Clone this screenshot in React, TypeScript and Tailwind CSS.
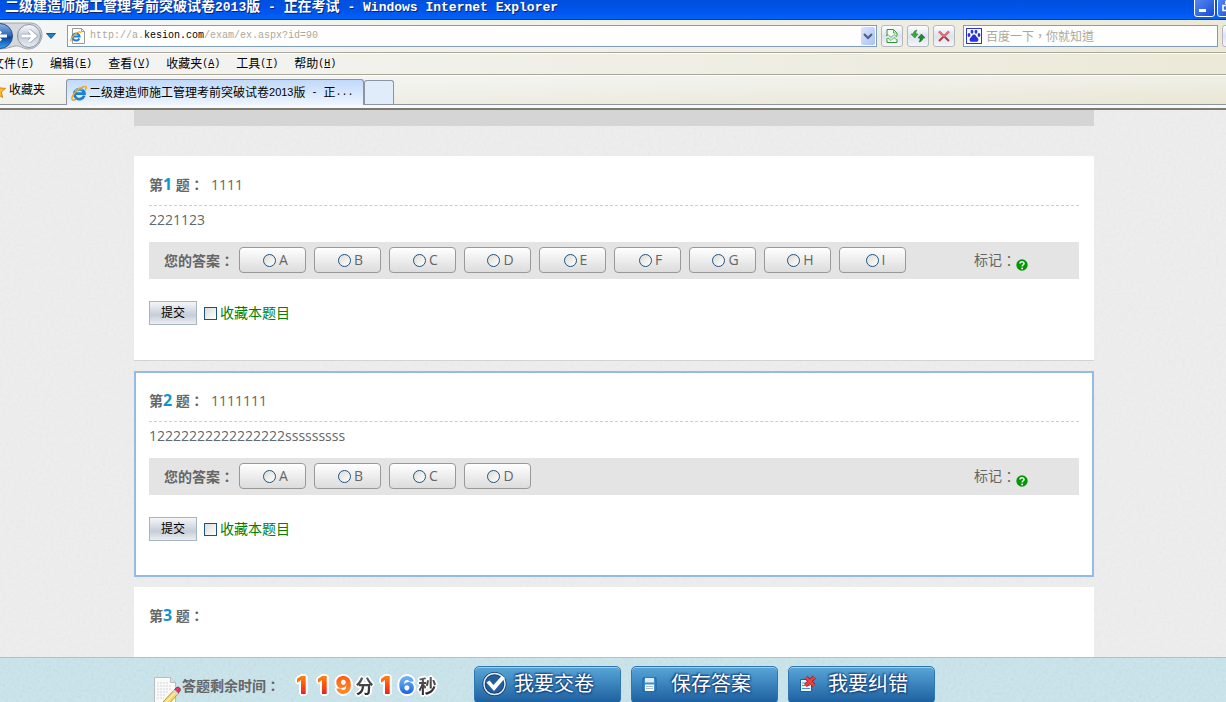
import { useState } from "react"
import type { ReactNode } from "react"
import { clsx } from "clsx"

type Question = {
  id: number
  title: string
  body: string
  options: string[]
}

const menuItems = [
  { label: "文件", hotkey: "F" },
  { label: "编辑", hotkey: "E" },
  { label: "查看", hotkey: "V" },
  { label: "收藏夹", hotkey: "A" },
  { label: "工具", hotkey: "T" },
  { label: "帮助", hotkey: "H" },
]

const questions: Question[] = [
  { id: 1, title: "1111", body: "2221123", options: ["A", "B", "C", "D", "E", "F", "G", "H", "I"] },
  { id: 2, title: "1111111", body: "12222222222222222sssssssss", options: ["A", "B", "C", "D"] },
  { id: 3, title: "", body: "", options: [] },
]

const RED = "from-[#ff8a10] via-[#fb4a12] to-[#d80022]"
const ORANGE = "from-[#ff5a10] to-[#ff9430]"
const BLUE = "from-[#7cc0fa] to-[#0a50d8]"
const GRAY = "from-[#666666] to-[#222222]"

const clockCells = [
  { text: "1", color: RED },
  { text: "1", color: RED },
  { text: "9", color: ORANGE },
  { text: "分", color: GRAY, unit: true },
  { text: "1", color: RED },
  { text: "6", color: BLUE },
  { text: "秒", color: GRAY, unit: true },
]

// Full-width colon centred in its cell
function Colon() {
  return <span className="font-['Noto_Sans_CJK_TC',sans-serif]">：</span>
}

function Texture({ id, className }: { id: string; className: string }) {
  return (
    <svg aria-hidden="true" className={clsx("pointer-events-none absolute inset-0 h-full w-full", className)}>
      <filter id={id}>
        <feTurbulence type="fractalNoise" baseFrequency="0.35" numOctaves="2" stitchTiles="stitch" />
        <feColorMatrix type="saturate" values="0" />
      </filter>
      <rect width="100%" height="100%" filter={`url(#${id})`} />
    </svg>
  )
}

function IeLogo({ className }: { className: string }) {
  return (
    <svg viewBox="0 0 16 16" className={className} aria-hidden="true">
      <path d="M13.2 10.6A5 5 0 1 1 13.4 8.6H4.8" fill="none" stroke="#1b7fd6" strokeWidth="2.8" />
      <path d="M4 5.8A5 5 0 0 1 11.5 5" fill="none" stroke="#69c4f5" strokeWidth="1.2" />
      <path d="M1.6 15C-.6 13.4 2.6 7.6 7.6 4.2 11 1.8 14.6.6 15.2 2c.3.8-.2 2-.9 3" fill="none" stroke="#f2a915" strokeWidth="1.5" />
      <path d="M1.6 15c1 .5 2.6-.2 4-1.2" fill="none" stroke="#d98a08" strokeWidth="1.3" />
    </svg>
  )
}

function BackForward() {
  return (
    <svg viewBox="0 0 44 30" className="h-[30px] w-11 shrink-0" aria-hidden="true">
      <defs>
        <linearGradient id="back" x1="0" y1="0" x2="0" y2="1">
          <stop offset="0" stopColor="#8fb4e4" />
          <stop offset=".48" stopColor="#2a66b8" />
          <stop offset=".55" stopColor="#0c429a" />
          <stop offset="1" stopColor="#35a4f4" />
        </linearGradient>
        <linearGradient id="forward" x1="0" y1="0" x2="0" y2="1">
          <stop offset="0" stopColor="#fafcff" />
          <stop offset=".5" stopColor="#c4ccd8" />
          <stop offset="1" stopColor="#e8edf4" />
        </linearGradient>
      </defs>
      <path d="M0 2h30c9 0 12 7 12 12s-4 14-14 14c-5 0-8-4-13-3S6 28 0 28" fill="#d4d8dd" stroke="#a2a6ac" />
      <circle cx="0" cy="15" r="12.5" fill="url(#back)" stroke="#2b4f86" />
      <path d="M-2 15h9M1 10.5l-5 4.5 5 4.5" fill="none" stroke="#fff" strokeWidth="3" />
      <circle cx="29" cy="15" r="11.5" fill="url(#forward)" stroke="#8d949e" />
      <path d="M21.5 15h12M29 9.5l6 5.5-6 5.5" fill="none" stroke="#9aa2ae" strokeWidth="4.4" />
      <path d="M21.5 15h12M29 9.5l6 5.5-6 5.5" fill="none" stroke="#fff" strokeWidth="3" />
    </svg>
  )
}

function ToolButton({ label, children }: { label: string; children?: ReactNode }) {
  return (
    <button
      type="button"
      aria-label={label}
      className="flex h-[22px] w-[22px] shrink-0 items-center justify-center rounded-[3px] border border-[#b4b8bd] bg-gradient-to-b from-white via-[#dde2ee] to-[#f4f6fa]"
    >
      {children}
    </button>
  )
}

function BrowserChrome() {
  return (
    <header className="shrink-0 font-['Liberation_Sans','Noto_Sans_CJK_SC',sans-serif] text-xs text-black">
      {/* Title bar */}
      <div className="flex h-5 items-start justify-between overflow-hidden bg-gradient-to-b from-[#0050de] via-[#0055ee] via-60% to-[#0066ff] shadow-[inset_0_-1px_0_#0038c8]">
        <h1 className="whitespace-nowrap pl-[5px] font-['Liberation_Mono','Noto_Sans_CJK_SC',monospace] text-[13px] font-bold leading-[14px] text-white [text-shadow:1px_1px_0_#0a246a]">
          <span className="text-sm leading-[14px]">二级建造师施工管理考前突破试卷</span>2013
          <span className="text-sm leading-[14px]">版</span> - <span className="text-sm leading-[14px]">正在考试</span> - Windows Internet Explorer
        </h1>
        <div className="-mr-3 -mt-1 flex gap-0.5">
          <button type="button" aria-label="最小化" className="flex h-[21px] w-[21px] items-end rounded-[3px] border border-white bg-gradient-to-br from-[#5c8cf4] to-[#1448d8] pb-1 pl-1">
            <span className="h-[3px] w-[7px] bg-white" />
          </button>
          <button type="button" aria-label="还原" className="flex h-[21px] w-[21px] items-end rounded-[3px] border border-white bg-gradient-to-br from-[#5c8cf4] to-[#1448d8] pb-1 pl-1">
            <svg viewBox="0 0 12 12" className="h-3 w-3" aria-hidden="true">
              <path d="M1 5.5h6v5H1zM4 4V1.5h7v6H8" fill="none" stroke="#fff" strokeWidth="1.6" />
            </svg>
          </button>
        </div>
      </div>

      {/* Address and search */}
      <div className="h-8 overflow-hidden bg-gradient-to-r from-[#f4f6f7] via-[#f1f0e8] to-[#ece9d8]">
        <div className="-mr-[18px] flex h-8 items-center">
          <BackForward />
          <button type="button" aria-label="历史记录" className="flex w-[23px] justify-center pr-2.5">
            <svg viewBox="0 0 10 6" className="h-1.5 w-2.5" aria-hidden="true">
              <path d="M.5.5h9L5 5.5z" fill="#1c83c6" stroke="#123f72" strokeWidth=".8" />
            </svg>
          </button>
          <div className="flex h-[22px] flex-1 items-center border border-[#7f9db9] bg-white pl-0.5 pr-px">
            <svg viewBox="0 0 16 16" className="mr-1 h-4 w-4 shrink-0" aria-hidden="true">
              <path d="M2.5.5h9l3 3v12h-12z" fill="#fff" stroke="#9a9a9a" />
              <path d="M11.5.5v3h3" fill="none" stroke="#9a9a9a" />
              <path d="M9.3 10.5A3.6 3.6 0 1 1 9.6 8.6H3" fill="none" stroke="#1b7fd6" strokeWidth="2" />
              <path d="M1 13.5C0 11 4 6.5 7 4.8 9 3.6 11 3.4 10.8 5" fill="none" stroke="#f2a915" strokeWidth="1.2" />
            </svg>
            <label htmlFor="address" className="whitespace-nowrap font-['Liberation_Mono',monospace] text-[10px] text-[#aca899]">
              http://a.<span className="text-black">kesion.com</span>/exam/ex.aspx?id=90
            </label>
            <input id="address" type="text" className="h-full min-w-0 flex-1 bg-transparent outline-none" />
            <button type="button" aria-label="地址列表" className="flex h-[18px] w-3.5 items-center justify-center rounded-[2px] bg-gradient-to-br from-[#dce6fe] to-[#a9c1f6]">
              <svg viewBox="0 0 10 7" className="h-[7px] w-2.5" aria-hidden="true">
                <path d="M1 1l4 4 4-4" fill="none" stroke="#4d6185" strokeWidth="2.2" />
              </svg>
            </button>
          </div>
          <div className="ml-1 mr-2 flex gap-1">
            <ToolButton label="兼容性视图">
              <svg viewBox="0 0 14 16" className="h-4 w-3.5" aria-hidden="true">
                <path d="M2 8V1.5h6.500L12 5v3M2 11.500v3h10v-3" fill="#f4fbf3" stroke="#2f9434" />
                <path d="M8.500 1.500V5H12" fill="none" stroke="#5cb85a" />
                <path d="M1 8l2-1.500L6 9.500l3-3 3 2.500M1 11.500L3 10l3 2.500 3-3 3 2.500" fill="none" stroke="#4cab4c" strokeWidth=".9" />
              </svg>
            </ToolButton>
            <ToolButton label="刷新">
              <svg viewBox="0 0 16 16" className="h-4 w-4" aria-hidden="true">
                <path d="M7 2C4.600 2.600 3.300 4 3 6H1l3.800 4L8 6H6c-.2-1.600.1-2.800 1-4z" fill="#3aa83a" stroke="#23862a" strokeWidth=".6" />
                <path d="M9 14c2.400-.6 3.700-2 4-4h2l-3.500-4L8 10h2c.2 1.600-.1 2.800-1 4z" fill="#1f8a26" stroke="#146818" strokeWidth=".6" />
              </svg>
            </ToolButton>
            <ToolButton label="停止">
              <svg viewBox="0 0 12 12" className="h-3 w-3" aria-hidden="true">
                <path d="M1 1.500l10 9.500M11 1.500L1 11" fill="none" stroke="#b03a3e" strokeWidth="2" />
                <path d="M1 1.500l5 4.700 5-4.700" fill="none" stroke="#e07274" strokeWidth="2" />
              </svg>
            </ToolButton>
          </div>
          <div className="mr-1 flex h-[22px] w-[255px] shrink-0 items-center border border-[#7f9db9] bg-white pl-0.5">
            <svg viewBox="0 0 16 16" className="mr-1 h-4 w-4 shrink-0" aria-hidden="true">
              <rect x=".5" y=".5" width="15" height="15" fill="#fff" stroke="#2932e1" />
              <path d="M8 6.5c-2 0-2 2-3.500 3.200C2.800 11.200 3.500 14 6 13.800c1.500-.2 2.500-.2 4 0 2.500.2 3.200-2.600 1.500-4.100C10 8.500 10 6.500 8 6.500z" fill="#2932e1" />
              <ellipse cx="3" cy="7" rx="1.4" ry="1.9" fill="#2932e1" />
              <ellipse cx="6" cy="3.8" rx="1.4" ry="2" fill="#2932e1" />
              <ellipse cx="10" cy="3.8" rx="1.4" ry="2" fill="#2932e1" />
              <ellipse cx="13" cy="7" rx="1.4" ry="1.9" fill="#2932e1" />
            </svg>
            <input
              type="search"
              aria-label="搜索"
              placeholder="百度一下，你就知道"
              className="min-w-0 flex-1 bg-transparent font-['Noto_Sans_CJK_TC',sans-serif] text-xs outline-none placeholder:text-[#aca899]"
            />
          </div>
          <ToolButton label="搜索按钮" />
        </div>
      </div>

      {/* Menu */}
      <nav className="flex h-[22px] items-center gap-4 overflow-hidden border-t border-[#aca899] bg-gradient-to-r from-[#f4f5f5] via-[#efefe6] to-[#ece9d8] shadow-[inset_0_1px_0_#fff]">
        {menuItems.map((item) => (
          <button key={item.hotkey} type="button" className="flex shrink-0 items-center whitespace-nowrap first:-ml-2">
            {item.label}
            <span className="font-['Liberation_Mono',monospace] text-[10px]">
              (<u>{item.hotkey}</u>)
            </span>
          </button>
        ))}
      </nav>

      {/* Favourites and tabs */}
      <div className="flex h-[31px] items-end border-b border-t border-b-[#8c94a0] border-t-[#aca899] bg-gradient-to-br from-[#f6f7f7] via-[#f0f0e9] to-[#e9e6d3] shadow-[inset_0_1px_0_#fff]">
        <button type="button" className="flex h-[29px] w-[66px] shrink-0 items-center overflow-hidden whitespace-nowrap">
          <svg viewBox="0 0 16 16" className="-ml-2.5 mr-[3px] h-4 w-4 shrink-0" aria-hidden="true">
            <path d="M8 1l2 5 5.5.4-4.2 3.600L12.600 15.500 8 12.500l-4.600 3 1.300-5.500L.5 6.400 6 6z" fill="#fdbd2c" stroke="#d9820c" />
          </svg>
          收藏夹
        </button>
        <button
          type="button"
          className="-mb-px flex h-[26px] w-[298px] items-center whitespace-nowrap rounded-t-[3px] border border-b-0 border-[#8c94a0] bg-gradient-to-b from-[#c0d9fa] to-[#eef5fe] pl-1"
        >
          <IeLogo className="mr-0.5 h-4 w-4 shrink-0" />
          <span>二级建造师施工管理考前突破试卷</span>
          <span className="text-[11px]">2013</span>
          <span>版</span>
          <span className="whitespace-pre font-['Liberation_Mono',monospace] text-[10px]"> - </span>
          <span>正</span>
          <span className="font-['Liberation_Mono',monospace] text-[10px]">...</span>
        </button>
        <button type="button" aria-label="新选项卡" className="h-6 w-[30px] rounded-t-[3px] border border-b-0 border-[#8c94a0] bg-[#e0ecf9]" />
      </div>
      <div className="h-[5px] border-b-2 border-[#7c7a6c] bg-[#f7f9fb]" />
    </header>
  )
}

function Option({ questionId, label }: { questionId: number; label: string }) {
  return (
    <label className="flex h-[26px] w-[67px] items-center justify-center gap-[3px] rounded-[4px] border border-[#999999] bg-gradient-to-b from-white to-[#dcdcdc] pl-1.5">
      <input
        type="radio"
        name={`answer-${questionId}`}
        className="h-[13px] w-[13px] appearance-none rounded-full border border-[#1d5281] bg-gradient-to-br from-[#dcdcd7] to-white checked:border-4"
      />
      {label}
    </label>
  )
}

function QuestionTitle({ question }: { question: Question }) {
  return (
    <h2 className="whitespace-pre leading-[34px]">
      <b>第</b>
      <b className="text-base leading-[34px] text-[#0c96cc]">{question.id}</b>
      <b>
        {" "}题<Colon />
      </b>
      {"  "}{question.title}
    </h2>
  )
}

function QuestionCard({ question, active }: { question: Question; active: boolean }) {
  const { id, body, options } = question

  return (
    <section
      className={clsx(
        "bg-white",
        active ? "border-2 border-[#93bbe8] px-[13px] pb-[34px] pt-2.5" : "border-b border-[#d3d3d3] px-[15px] pb-[35px] pt-[11px]"
      )}
    >
      <QuestionTitle question={question} />
      {options.length > 0 ? (
        <>
          <p className="mt-[3px] border-t border-dashed border-[#cccccc] pb-2 leading-7">{body}</p>
          <div className="flex h-[37px] items-center bg-[#e4e4e4] pb-px pl-[15px] pr-[51px]">
            <b className="mr-[5px] whitespace-nowrap">
              您的答案<Colon />
            </b>
            <div className="flex gap-2">
              {options.map((option) => (
                <Option key={option} questionId={id} label={option} />
              ))}
            </div>
            <div className="ml-auto flex items-center whitespace-nowrap">
              标记<Colon />
              <svg viewBox="0 0 12 12" className="mt-2.5 h-3 w-3" aria-hidden="true">
                <circle cx="6" cy="6" r="5.7" fill="#009900" />
                <path d="M4 4.6C4 2.3 8 2.3 8 4.5 8 6 6.2 5.9 6.2 7.4" fill="none" stroke="#fff" strokeWidth="1.5" />
                <circle cx="6.100" cy="9.4" r=".9" fill="#fff" />
              </svg>
            </div>
          </div>
          <div className="mt-[22px] flex items-center">
            <button
              type="button"
              className="h-6 w-12 border border-[#a5b5c1] bg-gradient-to-b from-[#f4f6f8] via-[#c6cdd9] via-60% to-[#eceff2] text-xs text-black"
            >
              提交
            </button>
            <label className="ml-[7px] flex items-center gap-[3px] text-[#008000]">
              <input
                type="checkbox"
                className="h-[13px] w-[13px] appearance-none border border-[#1d5281] bg-gradient-to-br from-[#dcdcd7] to-white checked:bg-[#21a121]"
              />
              收藏本题目
            </label>
          </div>
        </>
      ) : (
        <div className="h-36" />
      )}
    </section>
  )
}

function ActionButton({ icon, label }: { icon: ReactNode; label: string }) {
  return (
    <button
      type="button"
      className="flex h-[38px] w-[147px] shrink-0 items-center rounded-[5px] border border-[#2f77b0] bg-gradient-to-b from-[#58a6d8] to-[#1c5f9f] pb-0.5 pl-[7px] text-xl text-white shadow-[inset_0_1px_0_#9bd0ee]"
    >
      <span className="flex w-8 shrink-0 items-center">{icon}</span>
      <span className="whitespace-nowrap leading-6 [text-shadow:0_0_2px_#123f7c,1px_1px_2px_#123f7c,-1px_-1px_2px_#123f7c]">
        {label}
      </span>
    </button>
  )
}

function ExamFooter() {
  return (
    <footer className="relative h-[45px] shrink-0 overflow-hidden border-t border-[#b5bfc4] bg-[#cae6ed]">
      <Texture id="footer-noise" className="opacity-[0.16]" />
      <div className="relative mx-auto w-full max-w-[962px] pl-0.5">
        <div className="flex items-start pl-5 pt-2">
          <svg viewBox="0 0 28 30" className="mt-[11px] h-[30px] w-7 shrink-0" aria-hidden="true">
            <path d="M.5.5h16l5 5v24H.5z" fill="#fafafa" stroke="#bcbcbc" />
            <path d="M16.500.5v5h5" fill="#dedede" stroke="#bcbcbc" />
            <path d="M3 6h11M3 9h14M3 12h14M3 15h11M3 18h9M3 21h7" stroke="#d0d4d8" strokeDasharray="2 1" />
            <path d="M8 26L21 12l4 4-13 14z" fill="#f5d468" stroke="#a8842c" strokeWidth=".8" />
            <path d="M10 27L23 14" stroke="#fff3b0" strokeWidth="1.2" />
            <path d="M20 13l2.500-2.500c2-1.500 5 1.500 3.500 3.500L24 16.500z" fill="#dc3c66" stroke="#7c2444" strokeWidth=".8" />
            <path d="M18.800 14l4.200 4 1.500-1.500-4.200-4z" fill="#d8d8e0" />
          </svg>
          <b className="whitespace-nowrap pt-[9px] leading-5">
            答题剩余时间<Colon />
          </b>
          <div className="ml-[11px] flex h-10 items-center [filter:drop-shadow(1px_1px_0_#fff)_drop-shadow(-1px_-1px_0_#fff)_drop-shadow(1px_-1px_0_#fff)_drop-shadow(-1px_1px_0_#fff)]">
            {clockCells.map((cell, i) => (
              <span
                key={i}
                className={clsx(
                  "w-[21px] bg-gradient-to-b bg-clip-text text-center text-transparent",
                  cell.unit ? "text-lg font-bold leading-6" : "font-['Inter',sans-serif] text-2xl font-black leading-6",
                  cell.color
                )}
              >
                {cell.text}
              </span>
            ))}
          </div>
          <div className="ml-9 flex gap-2.5">
            <ActionButton
              label="我要交卷"
              icon={
                <svg viewBox="0 0 26 26" className="h-[26px] w-[26px]" aria-hidden="true">
                  <circle cx="12.5" cy="13" r="10.5" fill="#245c9c" stroke="#12386c" strokeWidth="3" />
                  <circle cx="12.5" cy="13" r="10.5" fill="none" stroke="#e4f0fa" strokeWidth="1.4" />
                  <path d="M4.5 11.5l3-2 4 4.5L20 4.5l3 2.500-11 13z" fill="#fff" />
                </svg>
              }
            />
            <ActionButton
              label="保存答案"
              icon={
                <svg viewBox="0 0 26 26" className="h-[26px] w-[26px]" aria-hidden="true">
                  <path d="M4 7h13v13H4z" fill="#3f8fce" stroke="#1d5e9e" />
                  <path d="M6 7h9v4.500H6z" fill="#dcecf8" />
                  <path d="M6 13.500h9V20H6z" fill="#fff" />
                  <path d="M7 15.500h7M7 17.500h7" stroke="#a8bfd2" />
                </svg>
              }
            />
            <ActionButton
              label="我要纠错"
              icon={
                <svg viewBox="0 0 26 26" className="h-[26px] w-[26px]" aria-hidden="true">
                  <path d="M4.500 8.500h11v12h-11z" fill="#eef6fc" stroke="#1d5e9e" />
                  <path d="M6 12h6M6 14.500h8M6 17.500h8" stroke="#4b92cc" strokeWidth="1.2" />
                  <path d="M10 6.500l8 8M18.500 6l-9 8.500" stroke="#8c1c24" strokeWidth="4" />
                  <path d="M10 6.500l8 8M18.500 6l-9 8.500" stroke="#ec4040" strokeWidth="2.6" />
                </svg>
              }
            />
          </div>
        </div>
      </div>
    </footer>
  )
}

export default function App() {
  const [activeId, setActiveId] = useState(2)

  return (
    <div className="flex h-screen flex-col overflow-hidden">
      <BrowserChrome />
      <div className="flex min-h-0 flex-1 flex-col font-['Open_Sans','Noto_Sans_CJK_SC',sans-serif] text-sm text-[#666666]">
        <main className="relative min-h-0 flex-1 overflow-hidden bg-[#eeeeee]">
          <Texture id="page-noise" className="opacity-[0.08]" />
          <div className="relative mx-auto max-w-[962px] pl-0.5">
            <div className="mb-[30px] h-4 bg-[#d5d5d5]" />
            <div className="flex flex-col gap-2.5">
              {questions.map((question) => (
                <div key={question.id} onClick={() => setActiveId(question.id)}>
                  <QuestionCard question={question} active={question.id === activeId} />
                </div>
              ))}
            </div>
          </div>
        </main>
        <ExamFooter />
      </div>
    </div>
  )
}
